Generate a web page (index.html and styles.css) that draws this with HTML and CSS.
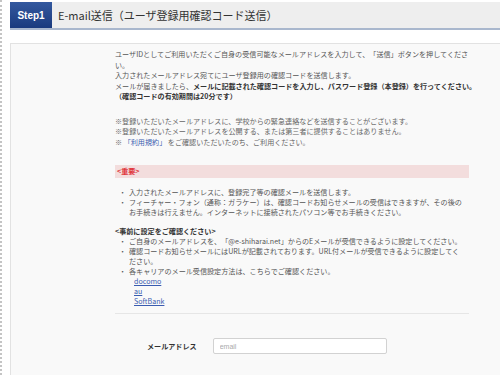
FILE: index.html
```html
<!DOCTYPE html>
<html>
<head>
  <meta charset="utf-8">
  <title>E-mail送信</title>
  <link rel="stylesheet" href="styles.css">
</head>
<body>
  <div class="page">
    <div class="step-head">
      <span class="step-no">Step1</span>
      <h1>E-mail送信（ユーザ登録用確認コード送信）</h1>
    </div>

    <div class="panel">
      <div class="panel-inner">
        <p class="lead">
          ユーザIDとしてご利用いただくご自身の受信可能なメールアドレスを入力して、「送信」ボタンを押してください。<br>
          入力されたメールアドレス宛てにユーザ登録用の確認コードを送信します。<br>
          メールが届きましたら、<b>メールに記載された確認コードを入力し、パスワード登録（本登録）を行ってください。</b><br>
          <b>（確認コードの有効期間は20分です）</b>
        </p>

        <p class="notes">
          ※登録いただいたメールアドレスに、学校からの緊急連絡などを送信することがございます。<br>
          ※登録いただいたメールアドレスを公開する、または第三者に提供することはありません。<br>
          ※ <a href="#">「利用規約」</a> をご確認いただいたのち、ご利用ください。
        </p>

        <div class="important">&lt;重要&gt;</div>

        <ul class="dots">
          <li>入力されたメールアドレスに、登録完了等の確認メールを送信します。</li>
          <li>フィーチャー・フォン（通称：ガラケー）は、確認コードお知らせメールの受信はできますが、その後のお手続きは行えません。インターネットに接続されたパソコン等でお手続きください。</li>
        </ul>

        <p class="sub-head">&lt;事前に設定をご確認ください&gt;</p>
        <ul class="dots">
          <li>ご自身のメールアドレスを、「@e-shiharai.net」からのEメールが受信できるように設定してください。</li>
          <li>確認コードお知らせメールにはURLが記載されております。URL付メールが受信できるように設定してください。</li>
          <li>各キャリアのメール受信設定方法は、こちらでご確認ください。
            <div class="carriers">
              <a href="#">docomo</a>
              <a href="#">au</a>
              <a href="#">SoftBank</a>
            </div>
          </li>
        </ul>

        <hr class="sep">

        <div class="form-row">
          <label for="email">メールアドレス</label>
          <input type="text" id="email" placeholder="email">
        </div>
      </div>
    </div>
  </div>
</body>
</html>
```

FILE: styles.css
```css
html, body {
  margin: 0;
  padding: 0;
}

body {
  background: #fff;
  font-family: "Noto Sans CJK JP", "Noto Sans", sans-serif;
  color: #555;
  border-left: 2px dotted #c4c4c4;
  overflow: hidden;
  min-height: 375px;
}

.page {
  width: 564px;
  padding: 2px 0 0 8px;
}

.step-head {
  display: flex;
  align-items: stretch;
  height: 26px;
  background: #eeeeee;
  border-bottom: 2px solid #a9b7cd;
}

.step-no {
  width: 42px;
  display: flex;
  align-items: center;
  justify-content: center;
  background: linear-gradient(#34599f, #1a3a7e);
  color: #fff;
  font-family: "Liberation Sans", Arial, sans-serif;
  font-weight: bold;
  font-size: 10px;
}

.step-head h1 {
  margin: 0 0 0 6px;
  font-size: 11px;
  font-weight: normal;
  color: #333;
  line-height: 26px;
  text-spacing-trim: space-all;
}

.panel {
  margin-top: 13px;
  background: #f9f9f9;
  border: 1px solid #e2e2e2;
  padding: 5px 0 40px 104px;
}

.panel-inner {
  width: 366px;
  font-size: 7.1px;
  line-height: 10.5px;
  text-spacing-trim: space-all;
}

.panel-inner p {
  margin: 0;
}

.lead b {
  color: #333;
}

.notes {
  margin-top: 14px !important;
  color: #666;
}

.notes a {
  color: #3a5cb0;
  text-decoration: none;
}

.important {
  margin: 18px 12px 0 0;
  background: #f3dddd;
  color: #e0343a;
  font-weight: bold;
  height: 13px;
  line-height: 13px;
  padding-left: 2px;
}

.dots {
  margin: 9px 16px 0 0;
  padding-left: 14px;
  list-style: none;
  line-height: 10.2px;
}

.dots li {
  position: relative;
}

.dots li::before {
  content: "・";
  position: absolute;
  left: -10px;
}

.sub-head {
  margin-top: 8px !important;
  font-weight: bold;
  color: #333;
}

.sub-head + .dots {
  margin-top: 0;
  line-height: 10px;
}

.carriers {
  padding-left: 5px;
  display: flex;
  flex-direction: column;
  align-items: flex-start;
}

.carriers a {
  color: #3a5cb0;
}

.sep {
  margin: 7px 12px 0 0;
  border: 0;
  border-top: 1px solid #e6e6e6;
}

.form-row {
  margin-top: 24px;
  padding-left: 32px;
  display: flex;
  align-items: center;
  gap: 16px;
}

.form-row label {
  font-weight: bold;
  color: #333;
}

.form-row input {
  width: 174px;
  height: 16px;
  box-sizing: border-box;
  border: 1px solid #d2d2d2;
  border-radius: 2px;
  background: #fff;
  font-family: "Liberation Sans", Arial, sans-serif;
  font-size: 7px;
  padding: 0 6px;
}

.form-row input::placeholder {
  color: #aaa;
}
```
